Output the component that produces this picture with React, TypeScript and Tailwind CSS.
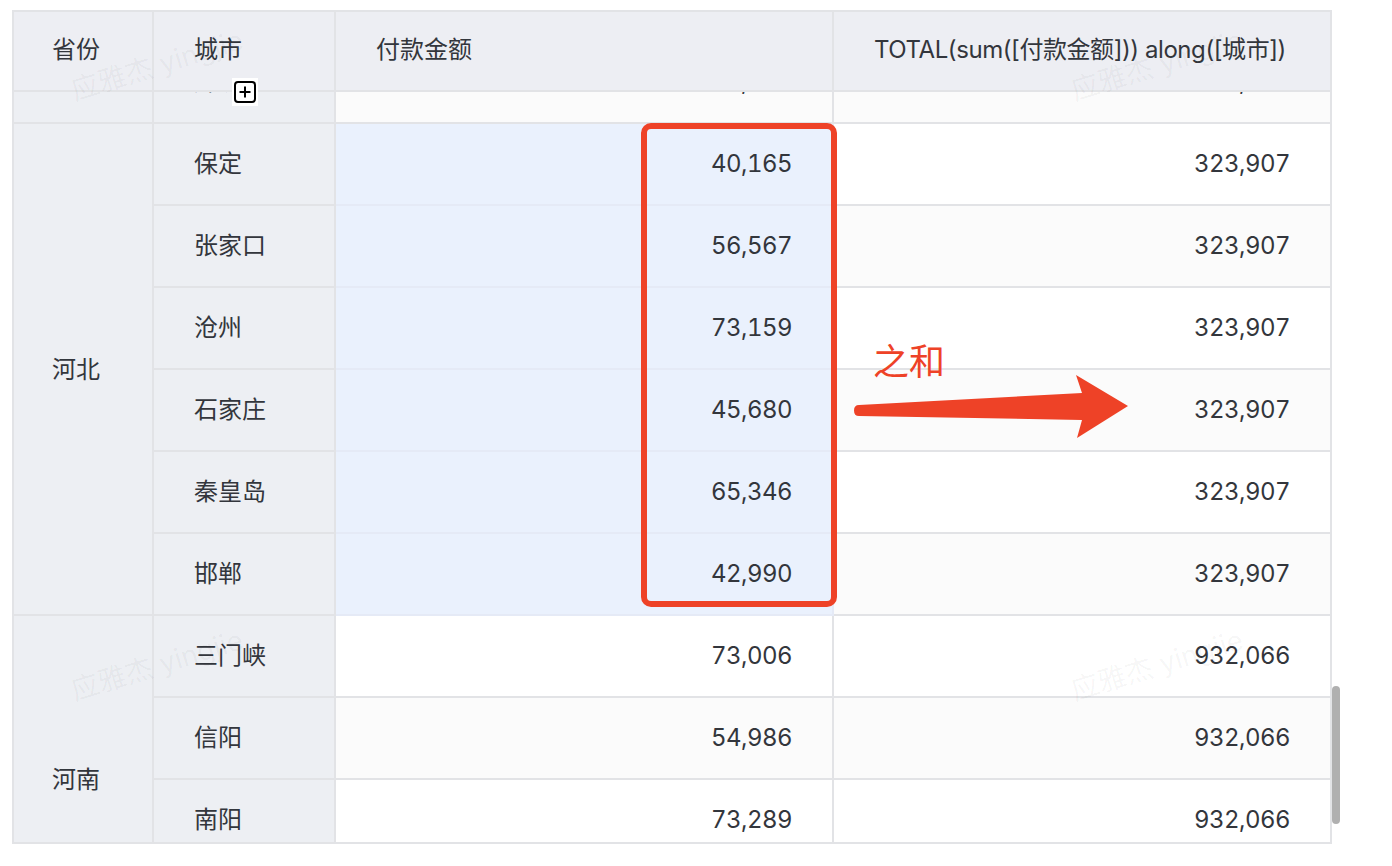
const FONT = "font-['Inter','Noto_Sans_CJK_SC',sans-serif]";

type Row = { city: string; amount: string; total: string };

const GROUPS: { province: string; highlight?: boolean; rows: Row[] }[] = [
  {
    // label of this group sits above the scrolled edge
    province: "",
    rows: [{ city: "廊坊", amount: "61,204", total: "412,563" }],
  },
  {
    province: "河北",
    highlight: true,
    rows: [
      { city: "保定", amount: "40,165", total: "323,907" },
      { city: "张家口", amount: "56,567", total: "323,907" },
      { city: "沧州", amount: "73,159", total: "323,907" },
      { city: "石家庄", amount: "45,680", total: "323,907" },
      { city: "秦皇岛", amount: "65,346", total: "323,907" },
      { city: "邯郸", amount: "42,990", total: "323,907" },
    ],
  },
  {
    province: "河南",
    rows: [
      { city: "三门峡", amount: "73,006", total: "932,066" },
      { city: "信阳", amount: "54,986", total: "932,066" },
      { city: "南阳", amount: "73,289", total: "932,066" },
      { city: "周口", amount: "68,412", total: "932,066" },
    ],
  },
];

const SPANS: Record<number, string> = {
  1: "row-span-1",
  4: "row-span-4",
  6: "row-span-6",
};

const COLS = "grid grid-cols-[140px_182px_498px_496px]";

function Watermarks() {
  return (
    <div className="absolute left-[68px] top-[51px] grid grid-cols-[1000px_1000px] auto-rows-[600px] pointer-events-none">
      {[0, 1, 2, 3].map((i) => (
        <span key={i} className="-rotate-[17deg] w-max h-max whitespace-nowrap text-[28px] leading-none text-black/[0.045]">
          应雅杰 yingjie
        </span>
      ))}
    </div>
  );
}

export default function App() {
  // stripes run through the whole body, including the half hidden first row
  let index = 0;

  return (
    <div className={`relative flex items-start w-[1392px] h-[866px] overflow-hidden bg-white pt-[10px] pl-[12px] ${FONT} text-[24px] text-[#33363c]`}>
      <div className="w-[1320px] h-[834px] shrink-0 border-2 border-[#e2e3e6] overflow-hidden">
        {/* header */}
        <div className={`${COLS} h-[80px] bg-[#edeef3] border-b-2 border-[#e2e3e6]`}>
          <div className="flex items-center pl-[38px] pb-[3px] border-r-2 border-[#e2e3e6]">省份</div>
          <div className="flex items-center pl-[40px] pb-[3px] border-r-2 border-[#e2e3e6]">城市</div>
          <div className="flex items-center pl-[40px] pb-[3px] border-r-2 border-[#e2e3e6]">付款金额</div>
          <div className="flex items-center pl-[40px] pb-[3px] whitespace-nowrap tracking-[-0.43px]">TOTAL(sum([付款金额])) along([城市])</div>
        </div>

        {/* body, scrolled so only the end of the first row shows */}
        <div className="h-[750px] overflow-hidden">
          <div className={`${COLS} auto-rows-[82px] -mt-[50px] tabular-nums`}>
            {GROUPS.map((group) => [
              <div
                key={group.province || "above"}
                className={`${SPANS[group.rows.length]} flex items-center pl-[38px] pt-[2px] bg-[#edeff3] border-r-2 border-b-2 border-[#e2e3e6]`}
              >
                {group.province}
              </div>,
              ...group.rows.map((row) => {
                const striped = index++ % 2 === 0;
                return [
                  <div
                    key={row.city}
                    className="flex items-center pl-[40px] bg-[#edeff3] border-r-2 border-b-2 border-[#e2e3e6]"
                  >
                    {row.city}
                  </div>,
                  <div
                    key={row.city + "-amount"}
                    className={`flex items-center justify-end pr-[40px] tracking-[-0.55px] border-r-2 border-b-2 ${
                      group.highlight
                        ? "bg-[#eaf1fd] border-[#e5eaf6]"
                        : `border-[#e2e3e6] ${striped ? "bg-[#fbfbfb]" : "bg-white"}`
                    }`}
                  >
                    {row.amount}
                  </div>,
                  <div
                    key={row.city + "-total"}
                    className={`flex items-center justify-end pr-[40px] tracking-[-0.55px] border-b-2 border-[#e2e3e6] ${
                      striped ? "bg-[#fbfbfb]" : "bg-white"
                    }`}
                  >
                    {row.total}
                  </div>,
                ];
              }),
            ])}
          </div>
        </div>
      </div>

      {/* scrollbar */}
      <div className="w-[8px] h-[138px] mt-[676px] shrink-0 rounded-full bg-[#b0b0b0]" />

      <Watermarks />

      {/* column resize handle */}
      <div className="absolute left-[232px] top-[78px] w-[26px] h-[28px] bg-white flex items-center justify-center">
        <svg width="22" height="22" viewBox="0 0 22 22" fill="none" stroke="#000" strokeWidth="2">
          <rect x="1" y="1" width="20" height="20" rx="3" />
          <path d="M5.5 11 H16.5 M11 5.5 V16.5" />
        </svg>
      </div>

      {/* annotation */}
      <div className="absolute left-[641px] top-[123px] w-[196px] h-[484px] rounded-[10px] border-[6px] border-[#ee4227]" />
      <span className="absolute left-[873px] top-[340px] text-[36px] leading-[44px] text-[#ee4227]">之和</span>
      <svg className="absolute left-0 top-0 pointer-events-none" width="1392" height="866" viewBox="0 0 1392 866">
        <path
          d="M859 405 L1082 393 L1076 375 L1128 406 L1077 438 L1082 420 L859 416 Q854 416 854 410.5 Q854 405 859 405 Z"
          fill="#ee4227"
        />
      </svg>
    </div>
  );
}
